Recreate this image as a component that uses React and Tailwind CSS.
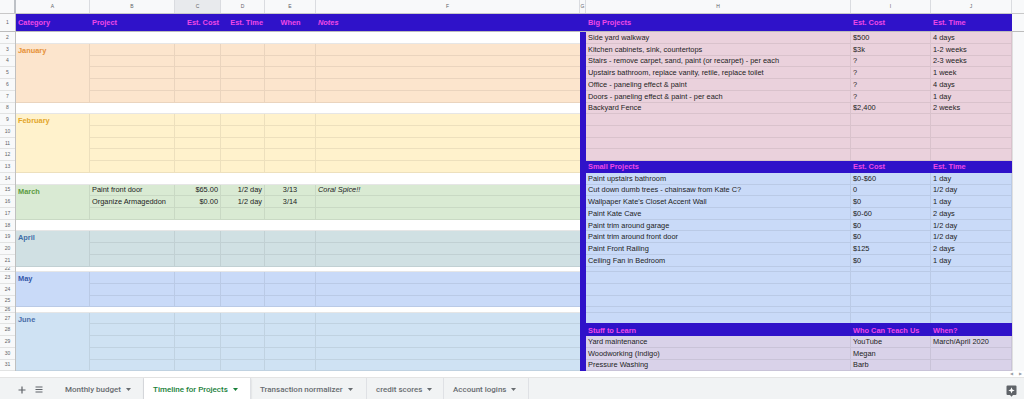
import React from "react";

const RH = "h-[11.73px]";
const SH = "h-[5.5px]";
const LINE = "border-black/[0.07]";

const COLS = [
  { k: "A", w: "w-[74px]" },
  { k: "B", w: "w-[85px]" },
  { k: "C", w: "w-[46px]" },
  { k: "D", w: "w-[44px]" },
  { k: "E", w: "w-[51px]" },
  { k: "F", w: "w-[264px]" },
  { k: "G", w: "w-[6px]" },
  { k: "H", w: "w-[265px]" },
  { k: "I", w: "w-[80px]" },
  { k: "J", w: "w-[81px]" },
];

const sections = [
  { blank: true, h: RH },
  { label: "January", rows: 5, bg: "bg-[#fce5cd]", tc: "text-[#e69138]" },
  { blank: true, h: RH },
  { label: "February", rows: 5, bg: "bg-[#fff2cc]", tc: "text-[#e3a62a]" },
  { blank: true, h: RH },
  {
    label: "March",
    rows: 3,
    bg: "bg-[#d9ead3]",
    tc: "text-[#5b9a41]",
    data: [
      ["Paint front door", "$65.00", "1/2 day", "3/13", "Coral Spice!!"],
      ["Organize Armageddon", "$0.00", "1/2 day", "3/14", ""],
    ],
  },
  { blank: true, h: RH },
  { label: "April", rows: 3, bg: "bg-[#d0e0e3]", tc: "text-[#3f6ea8]" },
  { blank: true, h: SH },
  { label: "May", rows: 3, bg: "bg-[#c9daf8]", tc: "text-[#3456a8]" },
  { blank: true, h: SH },
  { label: "June", rows: 5, bg: "bg-[#cfe2f3]", tc: "text-[#4a6fa8]" },
];

const big = [
  ["Side yard walkway", "$500", "4 days"],
  ["Kitchen cabinets, sink, countertops", "$3k", "1-2 weeks"],
  ["Stairs - remove carpet, sand, paint (or recarpet) - per each", "?", "2-3 weeks"],
  ["Upstairs bathroom, replace vanity, retile, replace toilet", "?", "1 week"],
  ["Office - paneling effect & paint", "?", "4 days"],
  ["Doors - paneling effect & paint - per each", "?", "1 day"],
  ["Backyard Fence", "$2,400", "2 weeks"],
  ["", "", ""],
  ["", "", ""],
  ["", "", ""],
  ["", "", ""],
];

const small = [
  ["Paint upstairs bathroom", "$0-$60", "1 day"],
  ["Cut down dumb trees - chainsaw from Kate C?", "0", "1/2 day"],
  ["Wallpaper Kate's Closet Accent Wall", "$0", "1 day"],
  ["Paint Kate Cave", "$0-60", "2 days"],
  ["Paint trim around garage", "$0", "1/2 day"],
  ["Paint trim around front door", "$0", "1/2 day"],
  ["Paint Front Railing", "$125", "2 days"],
  ["Ceiling Fan in Bedroom", "$0", "1 day"],
];

const learn = [
  ["Yard maintenance", "YouTube", "March/April 2020"],
  ["Woodworking (Indigo)", "Megan", ""],
  ["Pressure Washing", "Barb", ""],
];

const rowHeights = Array.from({ length: 30 }, (_, i) => {
  const n = i + 2;
  return n === 22 || n === 26 ? SH : RH;
});

function Cell({ w, children, className = "" }) {
  return (
    <div
      className={`${w} shrink-0 h-full border-r ${LINE} px-[2px] flex items-center overflow-hidden whitespace-nowrap ${className}`}
    >
      {children}
    </div>
  );
}

function HeaderCell({ w, children, className = "" }) {
  return (
    <div
      className={`${w} shrink-0 h-full px-[2px] flex items-center overflow-hidden whitespace-nowrap font-bold text-[#ee48e6] ${className}`}
    >
      {children}
    </div>
  );
}

function LeftBlock() {
  return (
    <div className="w-[564px] shrink-0 flex flex-col">
      {sections.map((s, i) => {
        if (s.blank) {
          return <div key={i} className={`${s.h} bg-white border-b border-[#e6e6e6]`} />;
        }
        return (
          <div key={i} className={`flex ${s.bg}`}>
            <div
              className={`w-[74px] shrink-0 border-r border-b ${LINE} px-[2px] pt-[1px] font-bold leading-[11px] ${s.tc}`}
            >
              {s.label}
            </div>
            <div className="flex flex-col">
              {Array.from({ length: s.rows }).map((_, r) => {
                const d = (s.data && s.data[r]) || ["", "", "", "", ""];
                return (
                  <div key={r} className={`flex ${RH} border-b ${LINE} text-[#222]`}>
                    <Cell w="w-[85px]">{d[0]}</Cell>
                    <Cell w="w-[46px]" className="justify-end">{d[1]}</Cell>
                    <Cell w="w-[44px]" className="justify-end">{d[2]}</Cell>
                    <Cell w="w-[51px]" className="justify-center">{d[3]}</Cell>
                    <Cell w="w-[264px]" className="italic border-r-0">{d[4]}</Cell>
                  </div>
                );
              })}
            </div>
          </div>
        );
      })}
    </div>
  );
}

function RightRow({ h, d, bg, line = LINE }) {
  return (
    <div className={`flex ${h} ${bg} border-b ${line} text-[#222]`}>
      <Cell w="w-[265px]">{d[0]}</Cell>
      <Cell w="w-[80px]">{d[1]}</Cell>
      <Cell w="w-[81px]">{d[2]}</Cell>
    </div>
  );
}

function RightHeader({ a, b, c }) {
  return (
    <div className={`flex ${RH} bg-[#2f12c9]`}>
      <HeaderCell w="w-[265px]">{a}</HeaderCell>
      <HeaderCell w="w-[80px]">{b}</HeaderCell>
      <HeaderCell w="w-[81px]">{c}</HeaderCell>
    </div>
  );
}

function RightBlock() {
  // rows 2..31
  const blueRows = [];
  small.forEach((d, i) => blueRows.push({ d, h: RH }));
  // rows 22..27 empty
  [SH, RH, RH, RH, SH, RH].forEach((h) => blueRows.push({ d: ["", "", ""], h }));
  return (
    <div className="w-[426px] shrink-0 flex flex-col">
      {big.map((d, i) => (
        <RightRow key={"b" + i} h={RH} d={d} bg="bg-[#ead1dc]" />
      ))}
      <RightHeader a="Small Projects" b="Est. Cost" c="Est. Time" />
      {blueRows.map((r, i) => (
        <RightRow
          key={"s" + i}
          h={r.h}
          d={r.d}
          bg="bg-[#c9daf8]"
          line={i === blueRows.length - 1 ? "border-[#2f12c9]" : LINE}
        />
      ))}
      <RightHeader a="Stuff to Learn" b="Who Can Teach Us" c="When?" />
      {learn.map((d, i) => (
        <RightRow key={"l" + i} h={RH} d={d} bg="bg-[#d9d2e9]" />
      ))}
    </div>
  );
}

function ExploreIcon() {
  return (
    <svg width="11" height="12" viewBox="0 0 11 12">
      <path d="M1.5 0.5h8a1 1 0 0 1 1 1v7.5a1 1 0 0 1-1 1H7l-1.5 1.8L4 10H1.5a1 1 0 0 1-1-1V1.5a1 1 0 0 1 1-1z" fill="#5f6368" />
      <path d="M5.5 2.2l0.9 2.3 2.3 0.9-2.3 0.9-0.9 2.3-0.9-2.3-2.3-0.9 2.3-0.9z" fill="#fff" />
    </svg>
  );
}

function Tab({ w, label, active }) {
  return (
    <div
      className={`${w} shrink-0 h-full flex items-center pl-[9px] gap-[5px] border-r border-[#dfe1e5] ${
        active ? "bg-white text-[#188038] shadow-[0_1px_2px_rgba(0,0,0,0.15)]" : "text-[#686c70]"
      }`}
    >
      <span className="font-medium">{label}</span>
      <svg width="5" height="3" viewBox="0 0 5 3">
        <path d="M0 0h5L2.5 3z" fill="currentColor" />
      </svg>
    </div>
  );
}

export default function App() {
  return (
    <div
      className="w-[1024px] h-[399px] overflow-hidden bg-white flex flex-col text-[7.4px]"
      style={{ fontFamily: '"Liberation Sans", Arial, sans-serif' }}
    >
      {/* column letters */}
      <div className="flex h-[14px] shrink-0 bg-[#f8f9fa] border-b border-[#c8c8c8] text-[5px] text-[#5f6368]">
        <div className="w-[16px] shrink-0 border-r-[2px] border-[#bdc1c6]" />
        {COLS.map((c) => (
          <div
            key={c.k}
            className={`${c.w} shrink-0 flex items-center justify-center border-r border-[#dadce0] ${
              c.k === "C" ? "bg-[#e8eaed]" : ""
            } ${c.k === "A" ? "w-[74px]" : ""}`}
          >
            {c.k}
          </div>
        ))}
        <div className="flex-1 bg-[#f8f9fa]" />
      </div>

      {/* row 1 */}
      <div className="flex h-[16.7px] shrink-0">
        <div className="w-[16px] shrink-0 bg-[#f8f9fa] border-r border-[#c0c0c0] flex items-center justify-center text-[5px] text-[#5f6368]">
          1
        </div>
        <div className="w-[996px] shrink-0 flex bg-[#2f12c9]">
          <HeaderCell w="w-[74px]">Category</HeaderCell>
          <HeaderCell w="w-[85px]">Project</HeaderCell>
          <HeaderCell w="w-[46px]" className="justify-end">Est. Cost</HeaderCell>
          <HeaderCell w="w-[44px]" className="justify-end">Est. Time</HeaderCell>
          <HeaderCell w="w-[51px]" className="justify-center">When</HeaderCell>
          <HeaderCell w="w-[264px]" className="italic">Notes</HeaderCell>
          <HeaderCell w="w-[6px]" />
          <HeaderCell w="w-[265px]">Big Projects</HeaderCell>
          <HeaderCell w="w-[80px]">Est. Cost</HeaderCell>
          <HeaderCell w="w-[81px]">Est. Time</HeaderCell>
        </div>
        <div className="flex-1 bg-[#f8f9fa]" />
      </div>
      <div className="h-[1.5px] shrink-0 bg-[#bcbcbc]" />

      {/* body */}
      <div className="flex shrink-0">
        <div className="w-[16px] shrink-0 flex flex-col bg-[#f8f9fa] border-r border-[#c0c0c0] text-[5px] text-[#5f6368]">
          {rowHeights.map((h, i) => (
            <div
              key={i}
              className={`${h} border-b border-[#e2e3e3] flex items-center justify-center overflow-hidden leading-none`}
            >
              {i + 2}
            </div>
          ))}
        </div>
        <LeftBlock />
        <div className="w-[6px] shrink-0 bg-[#2f12c9]" />
        <RightBlock />
        <div className="flex-1 bg-[#f8f9fa] border-l border-[#e0e0e0]" />
      </div>

      {/* horizontal scroll strip */}
      <div className="flex-1 bg-white flex items-center justify-end pr-[2px] gap-[6px] border-b border-[#e4e4e4]">
        <span className="text-[4px] text-[#9aa0a6]">◀</span>
        <span className="text-[4px] text-[#9aa0a6]">▶</span>
      </div>

      {/* tab bar */}
      <div
        className="h-[23px] shrink-0 bg-[#f1f3f4] flex items-center text-[8px]"
        style={{ fontFamily: "Roboto, Arial, sans-serif" }}
      >
        <div className="w-[56px] shrink-0 flex items-center h-full pl-[18px] gap-[9px] text-[#5f6368]">
          <svg width="8" height="8" viewBox="0 0 8 8">
            <path d="M4 0.5v7M0.5 4h7" stroke="#5f6368" strokeWidth="1.2" />
          </svg>
          <svg width="8" height="7" viewBox="0 0 8 7">
            <path d="M0.5 1h7M0.5 3.5h7M0.5 6h7" stroke="#5f6368" strokeWidth="1.2" />
          </svg>
        </div>
        <Tab w="w-[88px]" label="Monthly budget" />
        <Tab w="w-[107px]" label="Timeline for Projects" active />
        <Tab w="w-[116px]" label="Transaction normalizer" />
        <Tab w="w-[77px]" label="credit scores" />
        <Tab w="w-[85px]" label="Account logins" />
        <div className="flex-1" />
        <div className="pr-[7px] pt-[2px]">
          <ExploreIcon />
        </div>
      </div>
    </div>
  );
}
